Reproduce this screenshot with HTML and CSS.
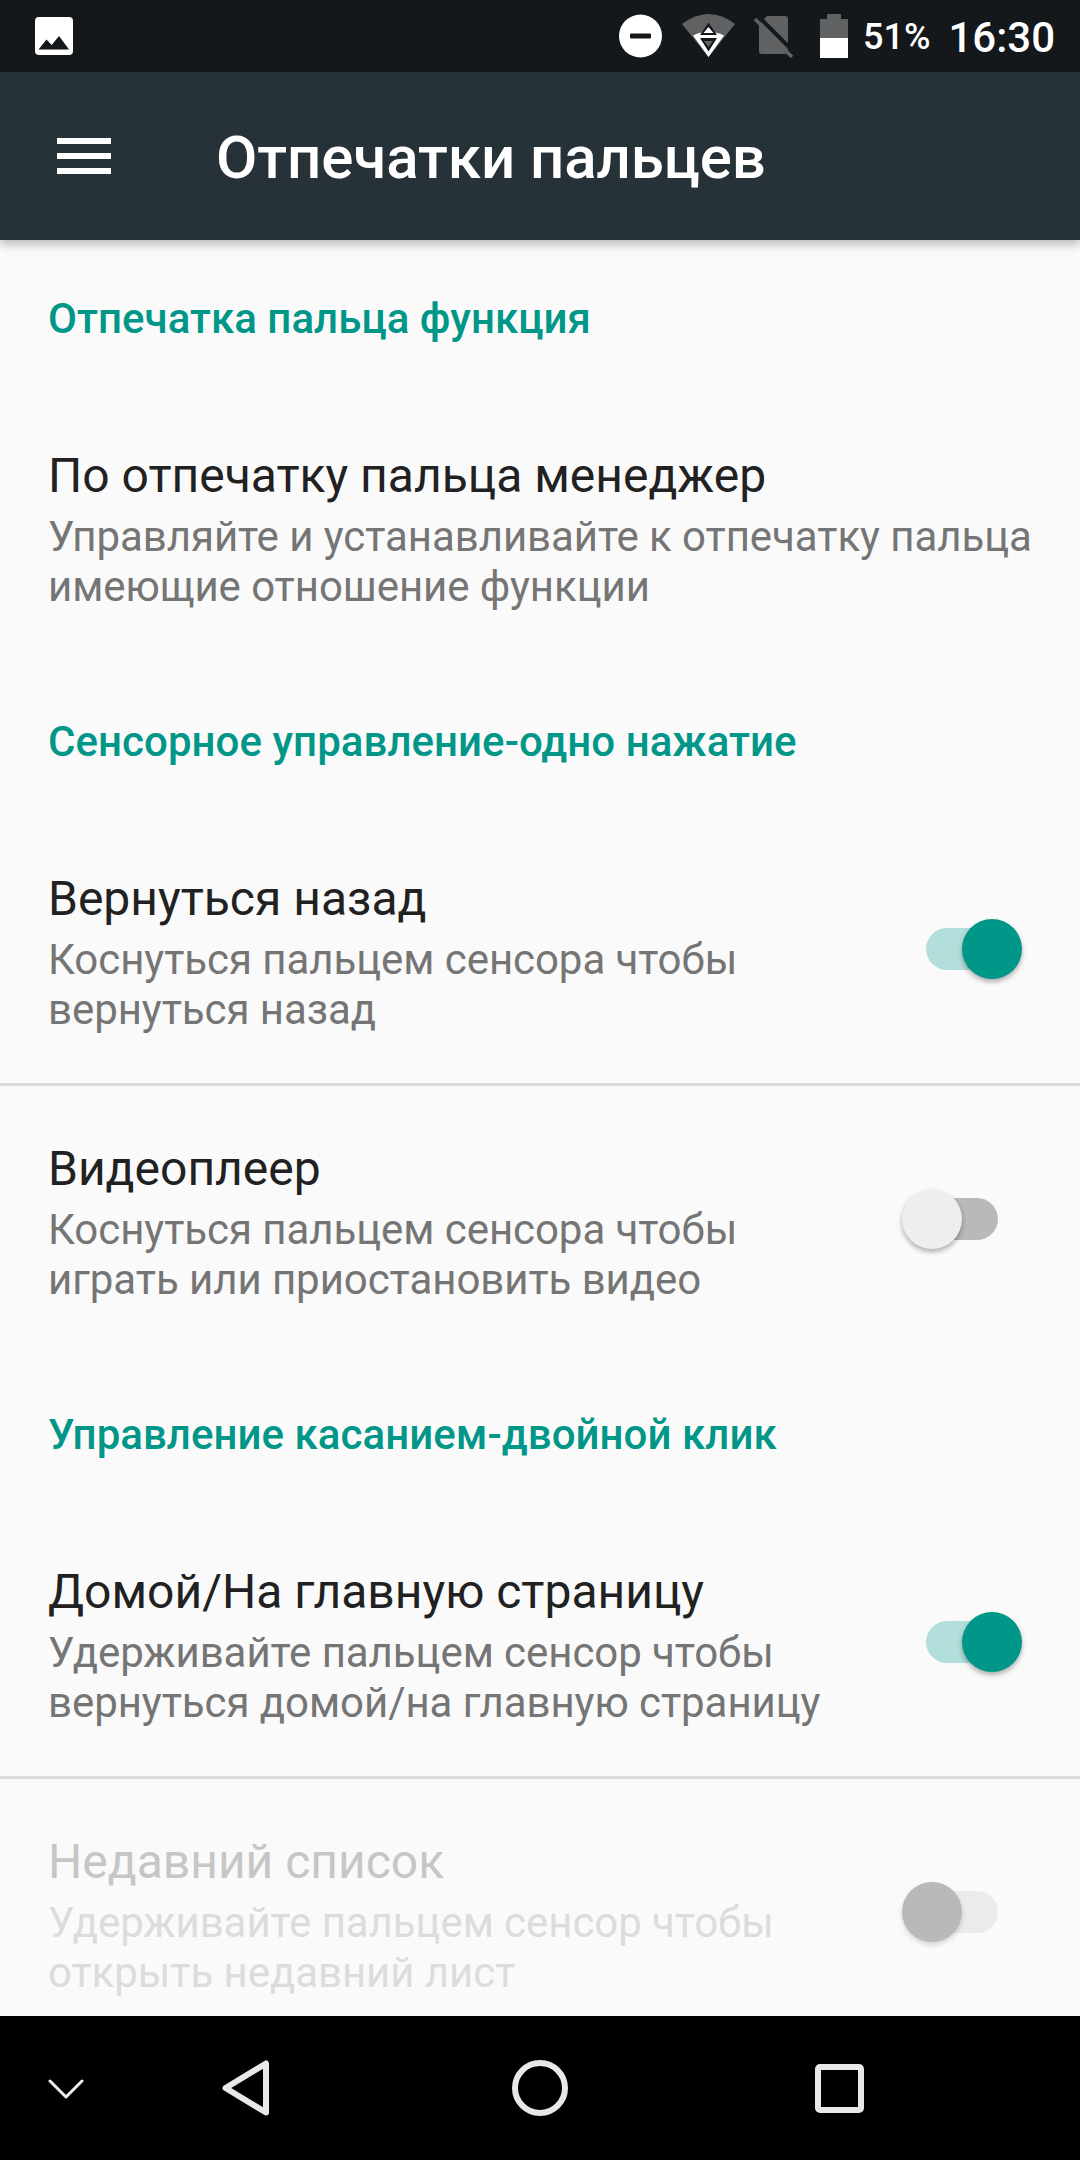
FILE: index.html
```html
<!DOCTYPE html>
<html lang="ru">
<head>
<meta charset="utf-8">
<title>Отпечатки пальцев</title>
<link rel="stylesheet" href="styles.css">
</head>
<body>
<div class="screen">
  <header class="status">
    <svg class="st-photo" width="38" height="38" viewBox="0 0 38 38"><rect x="0" y="0" width="38" height="38" rx="4" fill="#fff"/><path d="M3.500 32.500 L11.500 22.500 L16.700 28 L24 19 L34 32.500 Z" fill="#14181b"/></svg>
    <div class="status-right">
      <svg class="st-dnd" width="44" height="44" viewBox="0 0 44 44"><circle cx="21.500" cy="22" r="21.500" fill="#fff"/><rect x="11" y="19.500" width="21" height="5" rx="1" fill="#14181b"/></svg>
      <svg class="st-wifi" width="53" height="44" viewBox="0 0 53 44"><path d="M0 10 Q26.500 -10 53 10 L26.500 43 Z" fill="#5f6163"/><path d="M11 21.500 Q26.500 14 42 21.500 L26.500 43 Z" fill="#fff"/><path d="M26.500 8.500 L35 21 H18 Z M26.500 37.500 L35 24 H18 Z" fill="#14181b"/><path d="M26.500 13 L31.500 19 H21.500 Z" fill="#fff"/><path d="M26.500 33 L31 27 H22 Z" fill="#5f6163"/></svg>
      <svg class="st-sim" width="40" height="44" viewBox="0 0 40 44"><path d="M13 2 H31 a3 3 0 0 1 3 3 V37 a3 3 0 0 1 -3 3 H8 a3 3 0 0 1 -3 -3 V10 Z" fill="#5f6163"/><path d="M4 2 L40 38" stroke="#14181b" stroke-width="4"/><path d="M1 5 L38 43" stroke="#5f6163" stroke-width="3.500"/></svg>
      <svg class="st-batt" width="28" height="44" viewBox="0 0 28 44"><path d="M7 0 H21 V5 H28 V24 H0 V5 H7 Z" fill="#5f6163"/><rect x="0" y="24" width="28" height="20" fill="#fff"/></svg>
      <span class="st-pct">51%</span>
      <span class="st-time">16:30</span>
    </div>
  </header>
  <div class="toolbar">
    <div class="menu"><span></span><span></span><span></span></div>
    <h1 class="title">Отпечатки пальцев</h1>
  </div>
  <main class="content">
    <h2 class="section">Отпечатка пальца функция</h2>
    <div class="item">
      <div class="texts">
        <div class="item-title">По отпечатку пальца менеджер</div>
        <div class="item-sum">Управляйте и устанавливайте к отпечатку пальца имеющие отношение функции</div>
      </div>
    </div>
    <h2 class="section">Сенсорное управление-одно нажатие</h2>
    <div class="item ruled">
      <div class="texts">
        <div class="item-title">Вернуться назад</div>
        <div class="item-sum">Коснуться пальцем сенсора чтобы<br>вернуться назад</div>
      </div>
      <div class="switch on"><i></i></div>
    </div>
    <div class="item">
      <div class="texts">
        <div class="item-title">Видеоплеер</div>
        <div class="item-sum">Коснуться пальцем сенсора чтобы<br>играть или приостановить видео</div>
      </div>
      <div class="switch off"><i></i></div>
    </div>
    <h2 class="section">Управление касанием-двойной клик</h2>
    <div class="item ruled">
      <div class="texts">
        <div class="item-title">Домой/На главную страницу</div>
        <div class="item-sum">Удерживайте пальцем сенсор чтобы<br>вернуться домой/на главную страницу</div>
      </div>
      <div class="switch on"><i></i></div>
    </div>
    <div class="item disabled">
      <div class="texts">
        <div class="item-title">Недавний список</div>
        <div class="item-sum">Удерживайте пальцем сенсор чтобы<br>открыть недавний лист</div>
      </div>
      <div class="switch off"><i></i></div>
    </div>
  </main>
  <nav class="navbar">
    <svg class="nav-chev" width="36" height="20" viewBox="0 0 36 20"><path d="M2 2 L18 18 L34 2" fill="none" stroke="#eee" stroke-width="3" stroke-linecap="round" stroke-linejoin="round"/></svg>
    <svg class="nav-back" width="48" height="56" viewBox="0 0 48 56"><path d="M44 3.500 V52.500 L3.500 28 Z" fill="none" stroke="#e8e8e8" stroke-width="6" stroke-linejoin="round"/></svg>
    <svg class="nav-home" width="56" height="56" viewBox="0 0 56 56"><circle cx="28" cy="28" r="25" fill="none" stroke="#e8e8e8" stroke-width="6"/></svg>
    <svg class="nav-recent" width="49" height="49" viewBox="0 0 49 49"><rect x="3" y="3" width="43" height="43" rx="2" fill="none" stroke="#e8e8e8" stroke-width="6"/></svg>
  </nav>
</div>
</body>
</html>
```
FILE: styles.css
```css
* { box-sizing: border-box; }
html, body { margin: 0; padding: 0; }
body { background: #fafafa; font-family: Roboto, "Noto Sans", sans-serif; }
.screen { width: 1080px; height: 2160px; display: flex; flex-direction: column; overflow: hidden; }

.status { height: 72px; flex: none; background: #14181b; display: flex; align-items: center; justify-content: space-between; padding: 0 25px 0 35px; color: #fff; }
.status-right { display: flex; align-items: center; }
.st-dnd { margin-right: 19px; }
.st-wifi { margin-right: 19px; }
.st-sim { margin-right: 26px; }
.st-batt { margin-right: 15px; }
.st-pct { font-size: 36px; font-weight: 500; margin-right: 18px; margin-top: 2px; }
.st-time { font-size: 42px; font-weight: 500; margin-top: 2px; }

.toolbar { height: 168px; flex: none; background: #263238; display: flex; align-items: center; padding-left: 57px; box-shadow: 0 4px 10px rgba(0,0,0,.28); position: relative; z-index: 1; }
.menu { width: 54px; display: flex; flex-direction: column; gap: 9px; margin-right: 105px; }
.menu span { height: 6px; background: #fff; display: block; }
.title { margin: 4px 0 0; font-size: 60px; font-weight: 500; color: #fff; line-height: 1; letter-spacing: -0.06px; }

.content { flex: 1; overflow: hidden; }
.section { margin: 0; height: 153px; padding: 55px 48px 0; font-size: 42px; line-height: 48px; font-weight: 500; color: #009688; letter-spacing: 0.05px; }
.item { height: 270px; display: flex; align-items: flex-start; padding: 53px 0 0 48px; }
.item.ruled { border-bottom: 3px solid #dcdcdc; }
.texts { flex: 1; min-width: 0; padding-right: 30px; }
.item-title { font-size: 48px; line-height: 60px; color: #212121; }
.item-sum { font-size: 42px; line-height: 49.500px; color: #757575; margin-top: 6px; letter-spacing: -0.06px; }
.disabled .item-title { color: #c6c6c6; }
.disabled .item-sum { color: #dcdcdc; }

.switch { position: relative; width: 92px; height: 42px; border-radius: 21px; flex: none; margin-top: 59px; }
.switch i { position: absolute; top: -9px; width: 60px; height: 60px; border-radius: 50%; box-shadow: 0 3px 5px rgba(0,0,0,.3); }
.switch.on { background: #b2dfdb; margin-right: 62px; }
.switch.on i { right: -4px; background: #009688; }
.switch.off { background: #b9b9b9; margin-right: 82px; }
.switch.off i { left: -4px; background: #eee; }
.disabled .switch.off { background: #ebebeb; }
.disabled .switch.off i { background: #b9b9b9; box-shadow: 0 3px 5px rgba(0,0,0,.15); }

.navbar { height: 144px; flex: none; background: #000; display: flex; align-items: center; padding-left: 48px; }
.nav-chev { margin-right: 138px; margin-top: 2px; }
.nav-back { margin-right: 242px; }
.nav-home { margin-right: 247px; }
```
